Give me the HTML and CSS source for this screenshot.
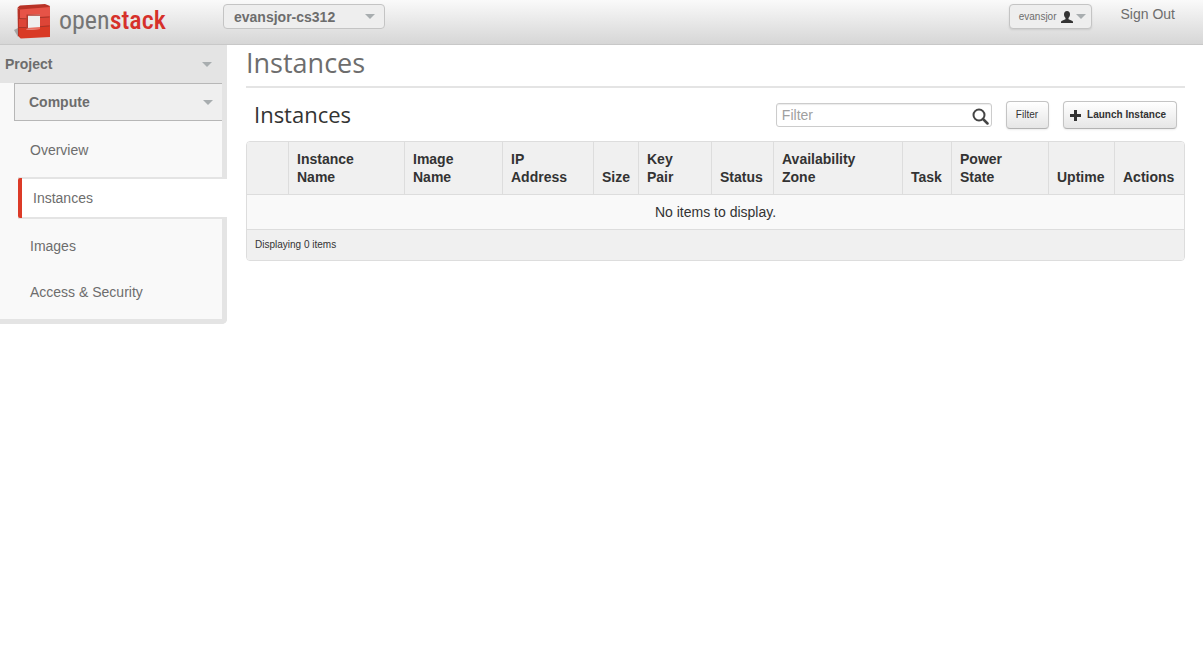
FILE: index.html
```html
<!DOCTYPE html>
<html lang="en">
<head>
<meta charset="utf-8">
<title>Instances - OpenStack Dashboard</title>
<link rel="stylesheet" href="styles.css">
</head>
<body>
<header class="topbar">
  <a class="brand" href="#" aria-label="openstack">
    <svg class="brand-mark" width="38" height="36" viewBox="0 0 38 36" aria-hidden="true">
      <path d="M0 26l4-2v9z" fill="#a5a5a5"/>
      <path d="M3.500 4L7 6v28.500L4 32z" fill="#b83226"/>
      <path d="M3.500 3.500L6 1.500 31 0l5 2-1 3-28 2z" fill="#b83226"/>
      <path d="M6 5.500l30-2.500v10l-10 .5V11l-13 .5V15l-7-1z" fill="#e65347"/>
      <path d="M5 14l8 .5V24l-8 .5zM26 13l10-1v11l-10 1z" fill="#dd4537"/>
      <path d="M5 24l8-.5V26l13-1v-3l10-1v12L7 34.500 5 32.500z" fill="#d93a25"/>
      <path d="M13 11l13-.5V23l-13 1z" fill="#efefef"/>
      <path d="M13 24l13-1v2l-14 1z" fill="#ea6e60"/>
      <path d="M12.500 10.500H26v1.200H14V24l-1.500 1z" fill="#b23a2e"/>
      <path d="M4 14.500l8.500.3M4 23.500h8.500M26 13.500l9.500-.5M26 22.700l9.500-.7" fill="none" stroke="#a8352a"/>
    </svg>
    <span class="brand-text">open<b>stack</b></span>
  </a>
  <div class="project-switch">
    <select aria-label="Project"><option>evansjor-cs312</option></select>
    <svg class="caret" width="10" height="5" viewBox="0 0 10 5" aria-hidden="true"><path d="M0 0h10L5 5z"/></svg>
  </div>
  <div class="account">
    <button class="user-menu" type="button" aria-haspopup="true">evansjor
      <svg width="12" height="12" viewBox="0 0 12 12" aria-hidden="true"><path d="M6 0c2 0 3 1.300 3 3.200C9 5 8.300 6.200 7.500 6.900v1.300l3.500 1.500c.7.300 1 .8 1 1.500V12H0v-.8c0-.7.300-1.200 1-1.500l3.500-1.500V6.900C3.700 6.200 3 5 3 3.200 3 1.300 4 0 6 0z" fill="#333"/></svg>
      <svg class="caret" width="10" height="5" viewBox="0 0 10 5" aria-hidden="true"><path d="M0 0h10L5 5z"/></svg>
    </button>
    <a class="sign-out" href="#">Sign Out</a>
  </div>
</header>
<div class="layout">
  <nav class="sidebar" aria-label="Main">
    <button class="group" type="button">Project
      <svg class="caret" width="10" height="5" viewBox="0 0 10 5" aria-hidden="true"><path d="M0 0h10L5 5z"/></svg>
    </button>
    <button class="panel-group" type="button">Compute
      <svg class="caret" width="10" height="5" viewBox="0 0 10 5" aria-hidden="true"><path d="M0 0h10L5 5z"/></svg>
    </button>
    <ul class="panels">
      <li><a href="#">Overview</a></li>
      <li class="active"><a href="#" aria-current="page">Instances</a></li>
      <li><a href="#">Images</a></li>
      <li><a href="#">Access &amp; Security</a></li>
    </ul>
  </nav>
  <main class="content">
    <h1>Instances</h1>
    <div class="toolbar">
      <h2>Instances</h2>
      <form class="actions">
        <label class="search">
          <input type="text" placeholder="Filter" aria-label="Filter">
          <svg width="17" height="17" viewBox="0 0 17 17" aria-hidden="true"><circle cx="7" cy="7" r="5.500" fill="none" stroke="#444" stroke-width="2"/><path d="M11 11l4.500 4.500" stroke="#444" stroke-width="2.500" stroke-linecap="round"/></svg>
        </label>
        <button class="btn" type="button">Filter</button>
        <button class="btn launch" type="button">
          <svg width="11" height="11" viewBox="0 0 11 11" aria-hidden="true"><path d="M4 0h3v4h4v3H7v4H4V7H0V4h4z" fill="#333"/></svg>
          Launch Instance
        </button>
      </form>
    </div>
    <div class="table-frame">
      <table>
        <colgroup>
          <col class="w-check"><col class="w-name"><col class="w-image"><col class="w-ip"><col class="w-size"><col class="w-key"><col class="w-status"><col class="w-zone"><col class="w-task"><col class="w-power"><col class="w-uptime"><col class="w-actions">
        </colgroup>
        <thead>
          <tr><th></th><th>Instance<br>Name</th><th>Image<br>Name</th><th>IP<br>Address</th><th>Size</th><th>Key<br>Pair</th><th>Status</th><th>Availability<br>Zone</th><th>Task</th><th>Power<br>State</th><th>Uptime</th><th>Actions</th></tr>
        </thead>
        <tbody><tr><td class="empty" colspan="12">No items to display.</td></tr></tbody>
        <tfoot><tr><td colspan="12">Displaying 0 items</td></tr></tfoot>
      </table>
    </div>
  </main>
</div>
</body>
</html>
```
FILE: styles.css
```css
* { box-sizing: border-box; }
body {
  margin: 0;
  background: #fff;
  color: #333;
  font: 14px/18px "Liberation Sans", Arial, sans-serif;
}
a { color: #6d6d6d; text-decoration: none; }
button, input, select { font: inherit; margin: 0; }
svg { display: block; flex: none; }
.caret { fill: #a8adaf; }

.topbar {
  display: flex;
  align-items: flex-start;
  height: 45px;
  border-bottom: 1px solid #c8c8c8;
  background: linear-gradient(#fafafa, #d6d6d6);
}
.brand {
  display: flex;
  align-items: flex-start;
  width: 223px;
  padding: 2px 0 0 14px;
}
.brand-mark { margin-top: 2px; }
.brand-text {
  padding-left: 7px;
  font: 26px/36px "Roboto Condensed", "Open Sans Condensed", sans-serif;
  color: #757575;
}
.brand-text b { font-weight: 500; color: #d6302a; }
.project-switch { position: relative; width: 162px; margin-top: 4px; }
.project-switch select {
  width: 100%;
  height: 25px;
  padding: 0 24px 0 10px;
  appearance: none;
  border: 1px solid #c4c4c4;
  border-radius: 4px;
  background: #eee;
  color: #6d6d6d;
  font-weight: 700;
}
.project-switch .caret { position: absolute; right: 10px; top: 10px; }
.account {
  display: flex;
  align-items: flex-start;
  gap: 29px;
  margin-left: auto;
  padding: 4px 28px 0 0;
}
.user-menu {
  display: flex;
  align-items: center;
  gap: 3px;
  height: 25px;
  padding: 0 5px 0 9px;
  border: 1px solid #c4c4c4;
  border-radius: 4px;
  background: #eee;
  box-shadow: 0 1px 2px rgba(0, 0, 0, .1);
  color: #6d6d6d;
  font-size: 10px;
}
.user-menu svg:first-of-type { margin-left: 1px; }
.sign-out { line-height: 20px; }

.layout { display: flex; align-items: flex-start; }
.sidebar {
  flex: none;
  width: 227px;
  border: solid #e4e4e4;
  border-width: 0 5px 5px 0;
  border-radius: 0 0 5px 0;
  background: #f9f9f9;
}
.group, .panel-group {
  display: flex;
  align-items: center;
  justify-content: space-between;
  width: 100%;
  height: 38px;
  border: 0;
  background: #e4e4e4;
  color: #6d6d6d;
  font-weight: 700;
}
.group { padding: 0 10px 0 5px; }
.panel-group {
  width: auto;
  min-width: calc(100% - 14px);
  margin-left: 14px;
  padding: 0 9px 0 14px;
  border: solid #b7b7b7;
  border-width: 1px 0 1px 1px;
  background: #efefef;
}
.panels { margin: 0; padding: 6px 0 4px 18px; list-style: none; }
.panels a { display: block; padding: 14px 12px; }
.panels .active {
  margin: 4px -5px 4px 0;
  border: solid #e4e4e4;
  border-width: 2px 0;
  background: #fff;
}
.panels .active a {
  margin: -1px 0;
  padding: 11px;
  border-left: 4px solid #dc3b28;
  border-radius: 2px 0 0 2px;
}

.content { flex: 1; min-width: 0; padding: 0 18px 0 19px; }
h1, h2 { margin: 0; font-family: "Open Sans", sans-serif; font-weight: 400; }
h1 {
  padding-bottom: 6px;
  border-bottom: 2px solid #e4e4e4;
  color: #6d6d6d;
  font-size: 27px;
  line-height: 35px;
}
.toolbar {
  display: flex;
  align-items: center;
  justify-content: space-between;
  padding: 13px 8px 12px;
}
h2 { padding-bottom: 2px; font-size: 22px; line-height: 26px; }
.actions { display: flex; align-items: center; gap: 14px; }
.search { position: relative; }
.search input {
  width: 216px;
  height: 24px;
  padding: 0 24px 0 5px;
  border: 1px solid #ccc;
  border-radius: 3px;
  box-shadow: inset 0 1px 1px rgba(0, 0, 0, .08);
  background: #fff;
}
.search input::placeholder { color: #a0a0a0; }
.search svg { position: absolute; right: 3px; top: 5px; }
.btn {
  display: flex;
  align-items: center;
  gap: 6px;
  height: 28px;
  padding: 0 10px 0 9px;
  border: 1px solid #c4c4c4;
  border-bottom-color: #b3b3b3;
  border-radius: 4px;
  background: linear-gradient(#fff, #e6e6e6);
  box-shadow: 0 1px 2px rgba(0, 0, 0, .08);
  color: #333;
  font-size: 10px;
}
.launch { padding: 0 10px 0 6px; font-weight: 700; }

.table-frame { border: 1px solid #ddd; border-radius: 4px; overflow: hidden; }
table { width: 100%; table-layout: fixed; border-collapse: separate; border-spacing: 0; }
th {
  padding: 8px;
  border-left: 1px solid #ddd;
  background: #f0f0f0;
  text-align: left;
  vertical-align: bottom;
}
th:first-child { border-left: 0; }
td { padding: 8px; border-top: 1px solid #ddd; }
.empty { background: #f9f9f9; text-align: center; }
tfoot td { padding: 6px 8px; background: #f0f0f0; font-size: 10px; }
.w-check { width: 41px; }
.w-name { width: 116px; }
.w-image { width: 98px; }
.w-ip { width: 91px; }
.w-size { width: 45px; }
.w-key { width: 73px; }
.w-status { width: 62px; }
.w-zone { width: 129px; }
.w-task { width: 49px; }
.w-power { width: 97px; }
.w-uptime { width: 66px; }
.w-actions { width: 70px; }
```
